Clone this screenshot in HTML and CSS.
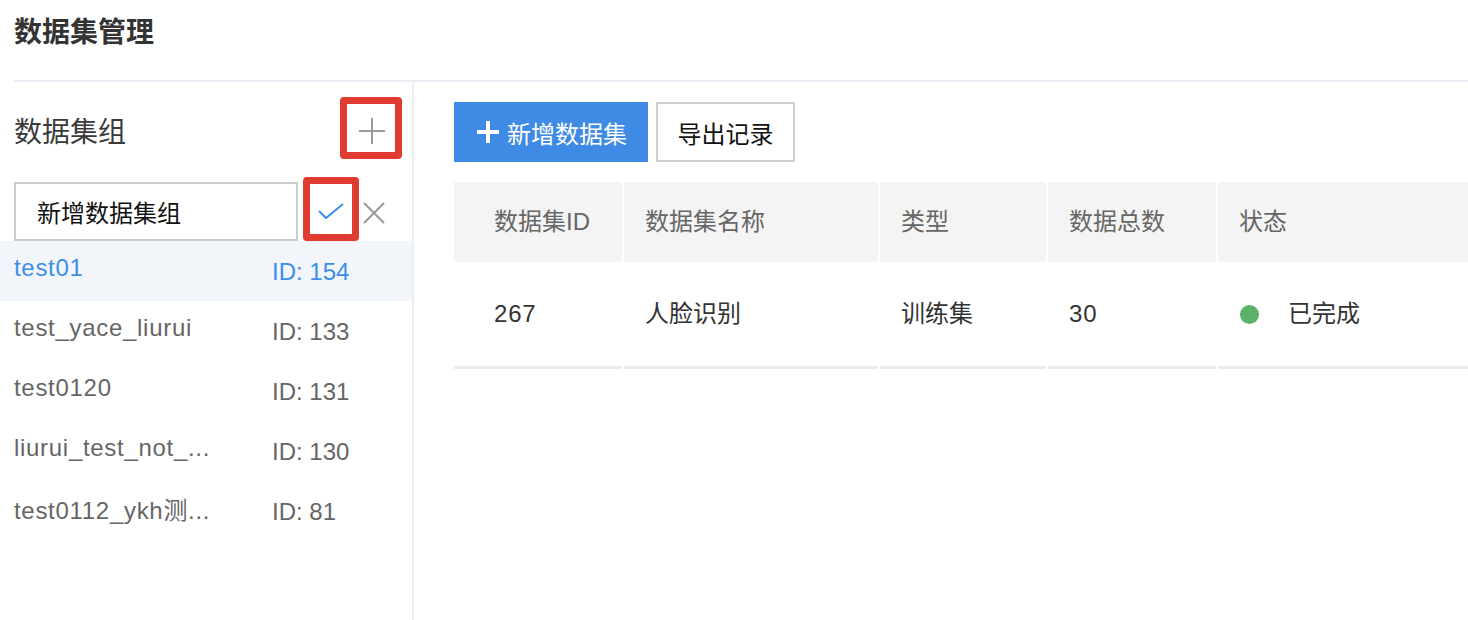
FILE: index.html
```html
<!DOCTYPE html>
<html lang="zh-CN">
<head>
    <meta charset="UTF-8">
    <meta name="viewport" content="width=device-width, initial-scale=1.0">
    <title>数据集管理</title>
    <link rel="stylesheet" href="styles.css">
</head>
<body>
    <div class="page-header">
        <h1 class="page-title">数据集管理</h1>
    </div>

    <div class="main">
        <div class="sidebar">
            <div class="group-head">
                <span class="group-title">数据集组</span>
                <button class="icon-btn add-btn marked" title="新增">
                    <svg width="28" height="28" viewBox="0 0 28 28">
                        <path d="M14 1v26M1 14h26" stroke="#999" stroke-width="2" fill="none"/>
                    </svg>
                </button>
            </div>

            <div class="new-group">
                <input class="group-input" type="text" value="新增数据集组">
                <button class="icon-btn ok-btn marked" title="确定">
                    <svg width="26" height="16" viewBox="0 0 26 16">
                        <path d="M1 8l7 7L25 1" stroke="#3d8ee8" stroke-width="2" fill="none"/>
                    </svg>
                </button>
                <button class="icon-btn cancel-btn" title="取消">
                    <svg width="22" height="22" viewBox="0 0 22 22">
                        <path d="M1 1l20 20M21 1L1 21" stroke="#999" stroke-width="2" fill="none"/>
                    </svg>
                </button>
            </div>

            <ul class="group-list">
                <li class="group-item active"><span class="group-name">test01</span><span class="group-id">ID: 154</span></li>
                <li class="group-item"><span class="group-name">test_yace_liurui</span><span class="group-id">ID: 133</span></li>
                <li class="group-item"><span class="group-name">test0120</span><span class="group-id">ID: 131</span></li>
                <li class="group-item"><span class="group-name">liurui_test_not_...</span><span class="group-id">ID: 130</span></li>
                <li class="group-item"><span class="group-name">test0112_ykh测...</span><span class="group-id">ID: 81</span></li>
            </ul>
        </div>

        <div class="content">
            <div class="toolbar">
                <button class="btn btn-primary">
                    <svg width="24" height="24" viewBox="0 0 24 24">
                        <path d="M12 1v22M1 12h22" stroke="#fff" stroke-width="4" fill="none"/>
                    </svg>
                    新增数据集
                </button>
                <button class="btn btn-default">导出记录</button>
            </div>

            <div class="table">
                <div class="cell head first">数据集ID</div>
                <div class="cell head">数据集名称</div>
                <div class="cell head">类型</div>
                <div class="cell head">数据总数</div>
                <div class="cell head">状态</div>

                <div class="cell body first num">267</div>
                <div class="cell body">人脸识别</div>
                <div class="cell body">训练集</div>
                <div class="cell body num">30</div>
                <div class="cell body"><span class="status-dot"></span>已完成</div>
            </div>
        </div>
    </div>
</body>
</html>
```

FILE: styles.css
```css
* {
    box-sizing: border-box;
}

body {
    margin: 0;
    font-family: "Liberation Sans", "Noto Sans CJK SC", sans-serif;
    font-size: 24px;
    color: #333;
    background-color: #fff;
    height: 620px;
    overflow: hidden;
}

.page-header {
    margin-left: 14px;
    height: 82px;
    border-bottom: 2px solid #e9eef5;
}

.page-title {
    margin: 0;
    padding-top: 14px;
    font-size: 28px;
    line-height: 38px;
    font-weight: 700;
    color: #333;
}

.main {
    display: flex;
    height: 538px;
}

.sidebar {
    width: 414px;
    flex-shrink: 0;
    border-right: 2px solid #eceef1;
}

.group-head {
    display: flex;
    align-items: center;
    justify-content: space-between;
    padding: 15px 10px 0 14px;
}

.group-title {
    font-size: 28px;
    color: #3a3a3a;
    padding-top: 4px;
}

.icon-btn {
    display: flex;
    align-items: center;
    justify-content: center;
    background: #fff;
    border: none;
    padding: 0;
    cursor: pointer;
}

.marked {
    border: 7px solid #e03b31;
    border-radius: 4px;
}

.add-btn {
    width: 62px;
    height: 62px;
    padding: 6px 0 0 2px;
}

.new-group {
    display: flex;
    align-items: flex-end;
    margin-top: 18px;
    padding-left: 14px;
}

.group-input {
    width: 284px;
    height: 59px;
    border: 2px solid #cbcbcb;
    padding: 0 0 0 21px;
    font-family: inherit;
    font-size: 24px;
    color: #111;
    outline: none;
}

.ok-btn {
    width: 56px;
    height: 64px;
    margin-left: 5px;
    padding-top: 4px;
}

.cancel-btn {
    width: 26px;
    height: 56px;
    margin-left: 2px;
}

.group-list {
    list-style: none;
    margin: 0;
    padding: 0;
}

.group-item {
    display: flex;
    align-items: center;
    height: 60px;
    padding-left: 14px;
    color: #666;
}

.group-item.active {
    background-color: #f2f6fb;
    color: #3d8ee8;
}

.group-name {
    width: 258px;
    margin-top: -6px;
    letter-spacing: 0.7px;
}

.group-id {
    margin-top: 2px;
}

.content {
    flex: 1;
    padding: 20px 0 0 40px;
}

.toolbar {
    display: flex;
    gap: 8px;
}

.btn {
    display: flex;
    align-items: center;
    height: 60px;
    font-family: inherit;
    font-size: 24px;
    cursor: pointer;
}

.btn-primary {
    width: 194px;
    padding: 0 0 0 22px;
    gap: 7px;
    background-color: #3f8ae5;
    color: #fff;
    border: none;
}

.btn-default {
    width: 139px;
    justify-content: center;
    padding: 0;
    background-color: #fff;
    color: #111;
    border: 2px solid #cfcfcf;
}

.table {
    display: grid;
    grid-template-columns: 168px 254px 166px 168px 1fr;
    column-gap: 2px;
    margin-top: 20px;
}

.cell {
    display: flex;
    align-items: center;
    padding-left: 21px;
}

.cell.first {
    padding-left: 40px;
}

.cell.head {
    height: 80px;
    padding-bottom: 6px;
    background-color: #f4f4f4;
    color: #666;
}

.cell.body {
    height: 107px;
    padding-bottom: 5px;
    border-bottom: 3px solid #ececec;
    color: #333;
}

.cell.body.num {
    padding-bottom: 0;
    letter-spacing: 0.8px;
}

.status-dot {
    width: 19px;
    height: 19px;
    border-radius: 50%;
    background-color: #5bb36a;
    margin: 5px 29px 0 1px;
}
```
